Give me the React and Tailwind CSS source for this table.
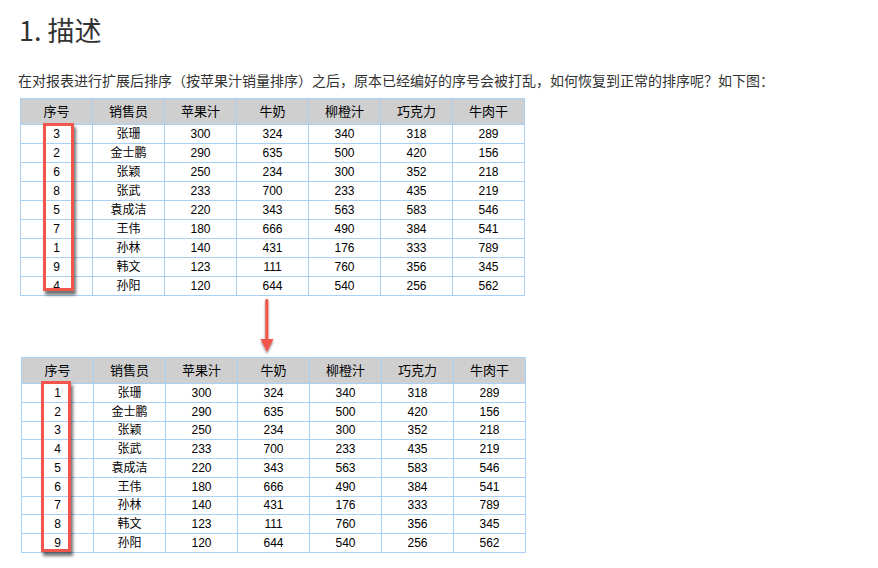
import React from "react";

const cols = ["序号", "销售员", "苹果汁", "牛奶", "柳橙汁", "巧克力", "牛肉干"];

const rows = [
  ["张珊", 300, 324, 340, 318, 289],
  ["金士鹏", 290, 635, 500, 420, 156],
  ["张颖", 250, 234, 300, 352, 218],
  ["张武", 233, 700, 233, 435, 219],
  ["袁成洁", 220, 343, 563, 583, 546],
  ["王伟", 180, 666, 490, 384, 541],
  ["孙林", 140, 431, 176, 333, 789],
  ["韩文", 123, 111, 760, 356, 345],
  ["孙阳", 120, 644, 540, 256, 562],
];

const shuffled = [3, 2, 6, 8, 5, 7, 1, 9, 4];
const ordered = [1, 2, 3, 4, 5, 6, 7, 8, 9];

function SalesTable({ nums, boxClass, rowClass }) {
  return (
    <div className="relative w-fit">
      <table
        className="border-collapse table-fixed text-[12px] text-black"
        style={{ fontFamily: '"Liberation Sans", "Noto Sans CJK SC", sans-serif' }}
      >
        <thead>
          <tr className="h-[26px] bg-[#cfcfcf]">
            {cols.map((c) => (
              <th key={c} className="w-[72px] border border-[#a9d0f5] font-normal text-[13px] p-0">
                {c}
              </th>
            ))}
          </tr>
        </thead>
        <tbody>
          {rows.map((r, i) => (
            <tr key={i} className={rowClass}>
              <td className="border border-[#a9d0f5] text-center p-0 leading-none">{nums[i]}</td>
              {r.map((v, j) => (
                <td key={j} className="border border-[#a9d0f5] text-center p-0 leading-none">
                  {v}
                </td>
              ))}
            </tr>
          ))}
        </tbody>
      </table>
      {/* red highlight over the 序号 column */}
      <div
        className={`absolute border-[3px] border-[#f0564b] shadow-[2px_4px_3px_rgba(0,0,0,0.55)] ${boxClass}`}
      />
    </div>
  );
}

export default function App() {
  return (
    <div
      className="w-[878px] h-[568px] bg-white text-[#333]"
      style={{ fontFamily: '"Noto Sans CJK SC", "Liberation Sans", sans-serif' }}
    >
      <h1 className="pl-[19px] pt-[12px] text-[27px] leading-[36px] font-normal text-[#333]">
        1. 描述
      </h1>
      <p className="pl-[18px] mt-[23px] text-[14px] leading-[18px] text-[#333]">
        在对报表进行扩展后排序（按苹果汁销量排序）之后，原本已经编好的序号会被打乱，如何恢复到正常的排序呢？如下图：
      </p>

      <div className="pl-[20px] mt-[9px]">
        <SalesTable
          nums={shuffled}
          rowClass="h-[19px]"
          boxClass="left-[23px] top-[25px] w-[31px] h-[168px]"
        />
      </div>

      {/* down arrow */}
      <div className="h-[61px] pl-[259px]">
        <svg width="16" height="61" viewBox="0 0 16 61">
          <defs>
            <filter id="sh" x="-50%" y="-20%" width="200%" height="150%">
              <feDropShadow dx="0" dy="2" stdDeviation="1.2" floodColor="#000" floodOpacity="0.45" />
            </filter>
          </defs>
          <g filter="url(#sh)">
            <rect x="6.3" y="3" width="3" height="42" rx="1.2" fill="#f0564b" />
            <path d="M1.5 43 L14.5 43 L8 56 Z" fill="#f0564b" />
          </g>
        </svg>
      </div>

      <div className="pl-[21px]">
        <SalesTable
          nums={ordered}
          rowClass="h-[18.75px]"
          boxClass="left-[20px] top-[24px] w-[30px] h-[171px]"
        />
      </div>
    </div>
  );
}
